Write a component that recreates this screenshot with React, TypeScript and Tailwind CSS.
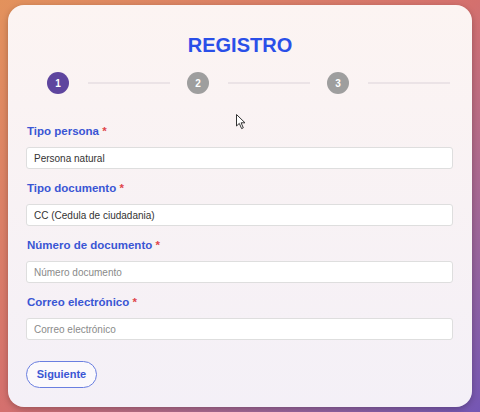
import React from "react";

const FIELDS = [
  { label: "Tipo persona", value: "Persona natural", placeholder: "" },
  { label: "Tipo documento", value: "CC (Cedula de ciudadania)", placeholder: "" },
  { label: "Número de documento", value: "", placeholder: "Número documento" },
  { label: "Correo electrónico", value: "", placeholder: "Correo electrónico" },
];

const Step = ({ n, active }: { n: number; active?: boolean }) => (
  <div className="w-[140px] shrink-0 flex items-center">
    <div
      className={`w-[22px] h-[22px] shrink-0 rounded-full flex items-center justify-center text-white text-[10px] font-bold ${
        active ? "bg-[#5e459e]" : "bg-[#9e9e9e]"
      }`}
    >
      {n}
    </div>
    <div className="ml-[19px] w-[82px] shrink-0 h-[2px] bg-[#ebe3e6]" />
  </div>
);

export default function App() {
  return (
    <div
      className="relative w-[480px] h-[412px] px-[8px] py-[5px] bg-gradient-to-br from-[#e3925c] via-[#d4706e] to-[#7456b4]"
      style={{ fontFamily: '"Liberation Sans", Arial, sans-serif' }}
    >
      <div className="h-full rounded-[16px] bg-gradient-to-b from-[#fcf4f2] to-[#f4f0f7] shadow-[0_2px_6px_rgba(0,0,0,0.25)] px-[18px] pt-[29px]">
        <h1 className="text-center text-[20px] leading-[23px] font-bold text-[#2a4fe8]">REGISTRO</h1>

        <div className="flex ml-[21px] mt-[15px]">
          <Step n={1} active />
          <Step n={2} />
          <Step n={3} />
        </div>

        <form className="mt-[30px] flex flex-col">
          {FIELDS.map((f, i) => (
            <div key={i} className={i > 0 ? "mt-[12px]" : ""}>
              <label className="block pl-[1px] text-[11.5px] leading-[14px] font-bold text-[#3a56d4]">
                {f.label} <span className="text-[#e0454a]">*</span>
              </label>
              <input
                readOnly
                value={f.value}
                placeholder={f.placeholder}
                className="mt-[9px] block w-[427px] h-[22px] px-[7px] bg-white border border-[#dedede] rounded-[3px] text-[10px] text-[#333] placeholder:text-[#8a8a8a] outline-none"
              />
            </div>
          ))}

          <button
            type="button"
            className="mt-[21px] self-start w-[71px] h-[27px] rounded-full border border-[#6a7fe0] bg-white/60 text-[11px] font-bold text-[#3a56d4]"
          >
            Siguiente
          </button>
        </form>
      </div>

      <svg className="absolute left-[236px] top-[114px]" width="11" height="16" viewBox="0 0 11 16">
        <path d="M0.5 0.5 L0.5 12 L3.3 9.4 L5.6 14.6 L7.3 13.8 L5.1 8.8 L9 8.8 Z" fill="#fff" stroke="#333" strokeWidth="1" strokeLinejoin="round" />
      </svg>
    </div>
  );
}
